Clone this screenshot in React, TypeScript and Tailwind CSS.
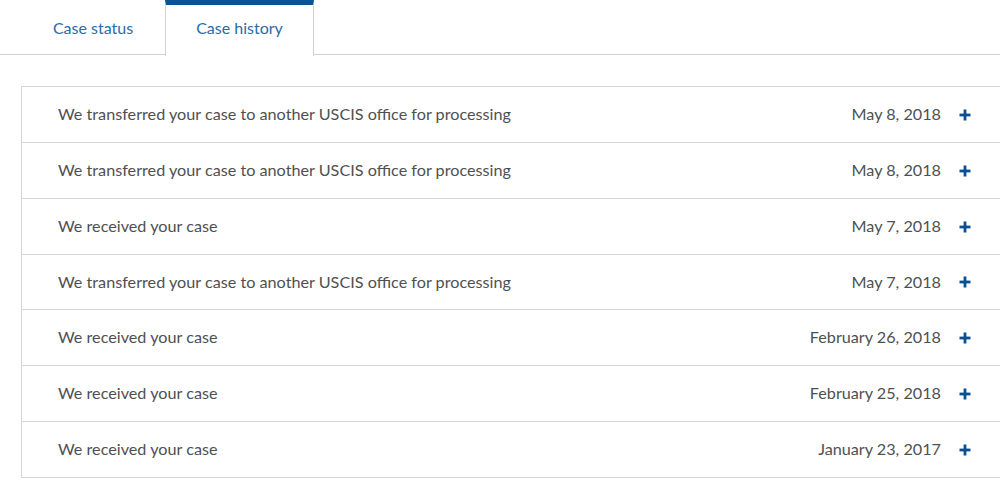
import React from "react";

const rows: [string, string, string][] = [
  ["We transferred your case to another USCIS office for processing", "May 8, 2018", "h-[55px]"],
  ["We transferred your case to another USCIS office for processing", "May 8, 2018", "h-[56px] border-t border-[#d6d6d6]"],
  ["We received your case", "May 7, 2018", "h-[56px] border-t border-[#d6d6d6]"],
  ["We transferred your case to another USCIS office for processing", "May 7, 2018", "h-[55px] border-t border-[#d6d6d6]"],
  ["We received your case", "February 26, 2018", "h-[56px] border-t border-[#d6d6d6]"],
  ["We received your case", "February 25, 2018", "h-[56px] border-t border-[#d6d6d6]"],
  ["We received your case", "January 23, 2017", "h-[56px] border-t border-[#d6d6d6]"],
];

function Plus() {
  return (
    <svg width="12" height="12" viewBox="0 0 12 12" className="shrink-0">
      <rect x="4.6" y="0.5" width="2.8" height="11" fill="#0b4f91" />
      <rect x="0.5" y="4.6" width="11" height="2.8" fill="#0b4f91" />
    </svg>
  );
}

export default function App() {
  return (
    <div
      className="w-[1000px] h-[490px] overflow-hidden bg-white"
      style={{ fontFamily: "Lato, 'Open Sans', sans-serif" }}
    >
      <div className="flex h-[55px] border-b-[1.5px] border-[#d0d0d0] pl-[21px]">
        <div className="w-[144px] flex items-center justify-center text-[16px] text-[#2c6aa8] pb-[-1px] pt-[1px]">
          Case status
        </div>
        <div className="relative w-[149px] -mb-[2px] bg-white border-x border-[#d0d0d0] border-t-[5px] border-t-[#0b5394] flex items-center justify-center text-[16px] text-[#2c6aa8] pb-[6px]">
          Case history
        </div>
      </div>
      <div className="pl-[21px] pt-[31px]">
        <div className="w-[1000px] border border-[#d6d6d6]">
          {rows.map(([t, d, cls], i) => (
            <div
              key={i}
              className={`flex items-center pl-[36px] text-[16.2px] text-[#505050] ${cls}`}
            >
              <span className="flex-1">{t}</span>
              <span className="w-[300px] text-right">{d}</span>
              <span className="ml-[18px] w-[61px] flex">
                <Plus />
              </span>
            </div>
          ))}
        </div>
      </div>
    </div>
  );
}
